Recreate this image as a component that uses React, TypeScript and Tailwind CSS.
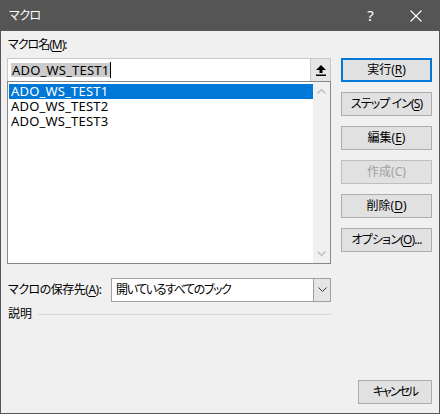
import React from 'react';

const font = { fontFamily: '"Segoe UI", "Noto Sans", "Noto Sans CJK JP", sans-serif' };

function Btn({ label, u, rest = '', primary = false, disabled = false, tight = '' }: { label: string; u?: string; rest?: string; primary?: boolean; disabled?: boolean; tight?: string }) {
  return (
    <div
      className={
        'h-[24px] w-[91px] flex items-center justify-center text-[12px] leading-none bg-[#e1e1e1] ' +
        (primary
          ? 'border-2 border-[#0078d7] text-black'
          : disabled
          ? 'border border-[#bfbfbf] text-[#a0a0a0]'
          : 'border border-[#adadad] text-black')
      }
    >
      <span className={tight}>
        {label}
        {u !== undefined && (
          <>
            (<span className={disabled ? '' : 'underline underline-offset-2'}>{u}</span>){rest}
          </>
        )}
      </span>
    </div>
  );
}

export default function App() {
  return (
    <div
      className="w-[440px] h-[414px] bg-[#f0f0f0] border border-t-0 border-[#555555] flex flex-col text-black select-none [font-feature-settings:'palt']"
      style={font}
    >
      {/* Title bar */}
      <div className="h-[31px] bg-[#555555] flex items-center shrink-0 text-white">
        <span className="pl-[8px] text-[12px] tracking-[-0.5px]">マクロ</span>
        <div className="ml-auto w-[45px] h-full flex items-center justify-center text-[15px]">?</div>
        <div className="w-[46px] h-full flex items-center justify-center">
          <svg width="12" height="12" viewBox="0 0 12 12" stroke="white" strokeWidth="1.1">
            <line x1="0.5" y1="0.5" x2="11.5" y2="11.5" />
            <line x1="11.5" y1="0.5" x2="0.5" y2="11.5" />
          </svg>
        </div>
      </div>

      {/* Body */}
      <div className="flex-1 flex pl-[6px] pr-[6px] pb-[9px] gap-[10px]">
        {/* Left column */}
        <div className="w-[324px] flex flex-col pt-[6px]">
          <div className="h-[16px] text-[12px] leading-[16px] pl-[1px] mb-[5px] tracking-[-1px]">
            マクロ名(<span className="underline underline-offset-2">M</span>):
          </div>

          {/* Edit box */}
          <div className="h-[23px] border border-[#c8c8c8] border-b-0 bg-white flex items-center">
            <div className="flex-1 flex items-center pl-[3px]">
              <span className="bg-[#cccccc] text-[13px] leading-[14px] tracking-[0.2px] px-[1px]">ADO_WS_TEST1</span>
              <span className="w-[1px] h-[16px] bg-black" />
            </div>
            <div className="w-[20px] h-full bg-[#e5e5e5] border-l border-[#c8c8c8] flex items-center justify-center">
              <svg width="10" height="11" viewBox="0 0 10 11" fill="black">
                <polygon points="5,0 10,5 6.5,5 6.5,8 3.5,8 3.5,5 0,5" />
                <rect x="0" y="9.5" width="10" height="1.5" />
              </svg>
            </div>
          </div>

          {/* List box */}
          <div className="h-[183px] border border-[#828790] bg-white flex">
            <div className="flex-1 pt-[2px] pl-[1px] text-[13px] tracking-[0.2px]">
              <div className="h-[15px] leading-[15px] bg-[#0078d7] text-white pl-[2px]">ADO_WS_TEST1</div>
              <div className="h-[15px] leading-[15px] pl-[2px]">ADO_WS_TEST2</div>
              <div className="h-[15px] leading-[15px] pl-[2px]">ADO_WS_TEST3</div>
            </div>
            <div className="w-[17px] bg-[#f0f0f0] flex flex-col items-center justify-between py-[6px]">
              <svg width="9" height="6" viewBox="0 0 9 6" fill="none" stroke="#c0c0c0" strokeWidth="1.5">
                <polyline points="0.5,5.5 4.5,1.5 8.5,5.5" />
              </svg>
              <svg width="9" height="6" viewBox="0 0 9 6" fill="none" stroke="#c0c0c0" strokeWidth="1.5">
                <polyline points="0.5,0.5 4.5,4.5 8.5,0.5" />
              </svg>
            </div>
          </div>

          {/* Macro location */}
          <div className="mt-[14px] h-[24px] flex items-center">
            <span className="w-[104px] text-[12px] pl-[1px] tracking-[-0.5px]">
              マクロの保存先(<span className="underline underline-offset-2">A</span>):
            </span>
            <div className="flex-1 h-full border border-[#a0a0a0] bg-white flex items-center">
              <span className="flex-1 pl-[4px] text-[12px] tracking-[-1.4px]">開いているすべてのブック</span>
              <div className="w-[17px] h-full bg-[#e5e5e5] border-l border-[#a0a0a0] flex items-center justify-center">
                <svg width="9" height="6" viewBox="0 0 9 6" fill="none" stroke="#333333" strokeWidth="1">
                  <polyline points="0.5,0.5 4.5,4.5 8.5,0.5" />
                </svg>
              </div>
            </div>
          </div>

          {/* Description */}
          <div className="mt-[4px] h-[16px] flex items-center gap-[6px]">
            <span className="text-[12px] leading-[16px] pl-[1px]">説明</span>
            <div className="flex-1 h-[1px] bg-[#d9d9d9]" />
          </div>
        </div>

        {/* Right column */}
        <div className="flex flex-col pt-[27px] gap-[10px]">
          <Btn label="実行" u="R" primary />
          <Btn label="ステップ イン" u="S" tight="tracking-[-0.9px]" />
          <Btn label="編集" u="E" />
          <Btn label="作成" u="C" disabled />
          <Btn label="削除" u="D" />
          <Btn label="オプション" u="O" rest="..." tight="tracking-[-0.8px]" />
          <div className="mt-auto flex justify-end">
            <div className="h-[24px] w-[74px] flex items-center justify-center text-[12px] bg-[#e1e1e1] border border-[#adadad] tracking-[-2px]">
              キャンセル
            </div>
          </div>
        </div>
      </div>
    </div>
  );
}
